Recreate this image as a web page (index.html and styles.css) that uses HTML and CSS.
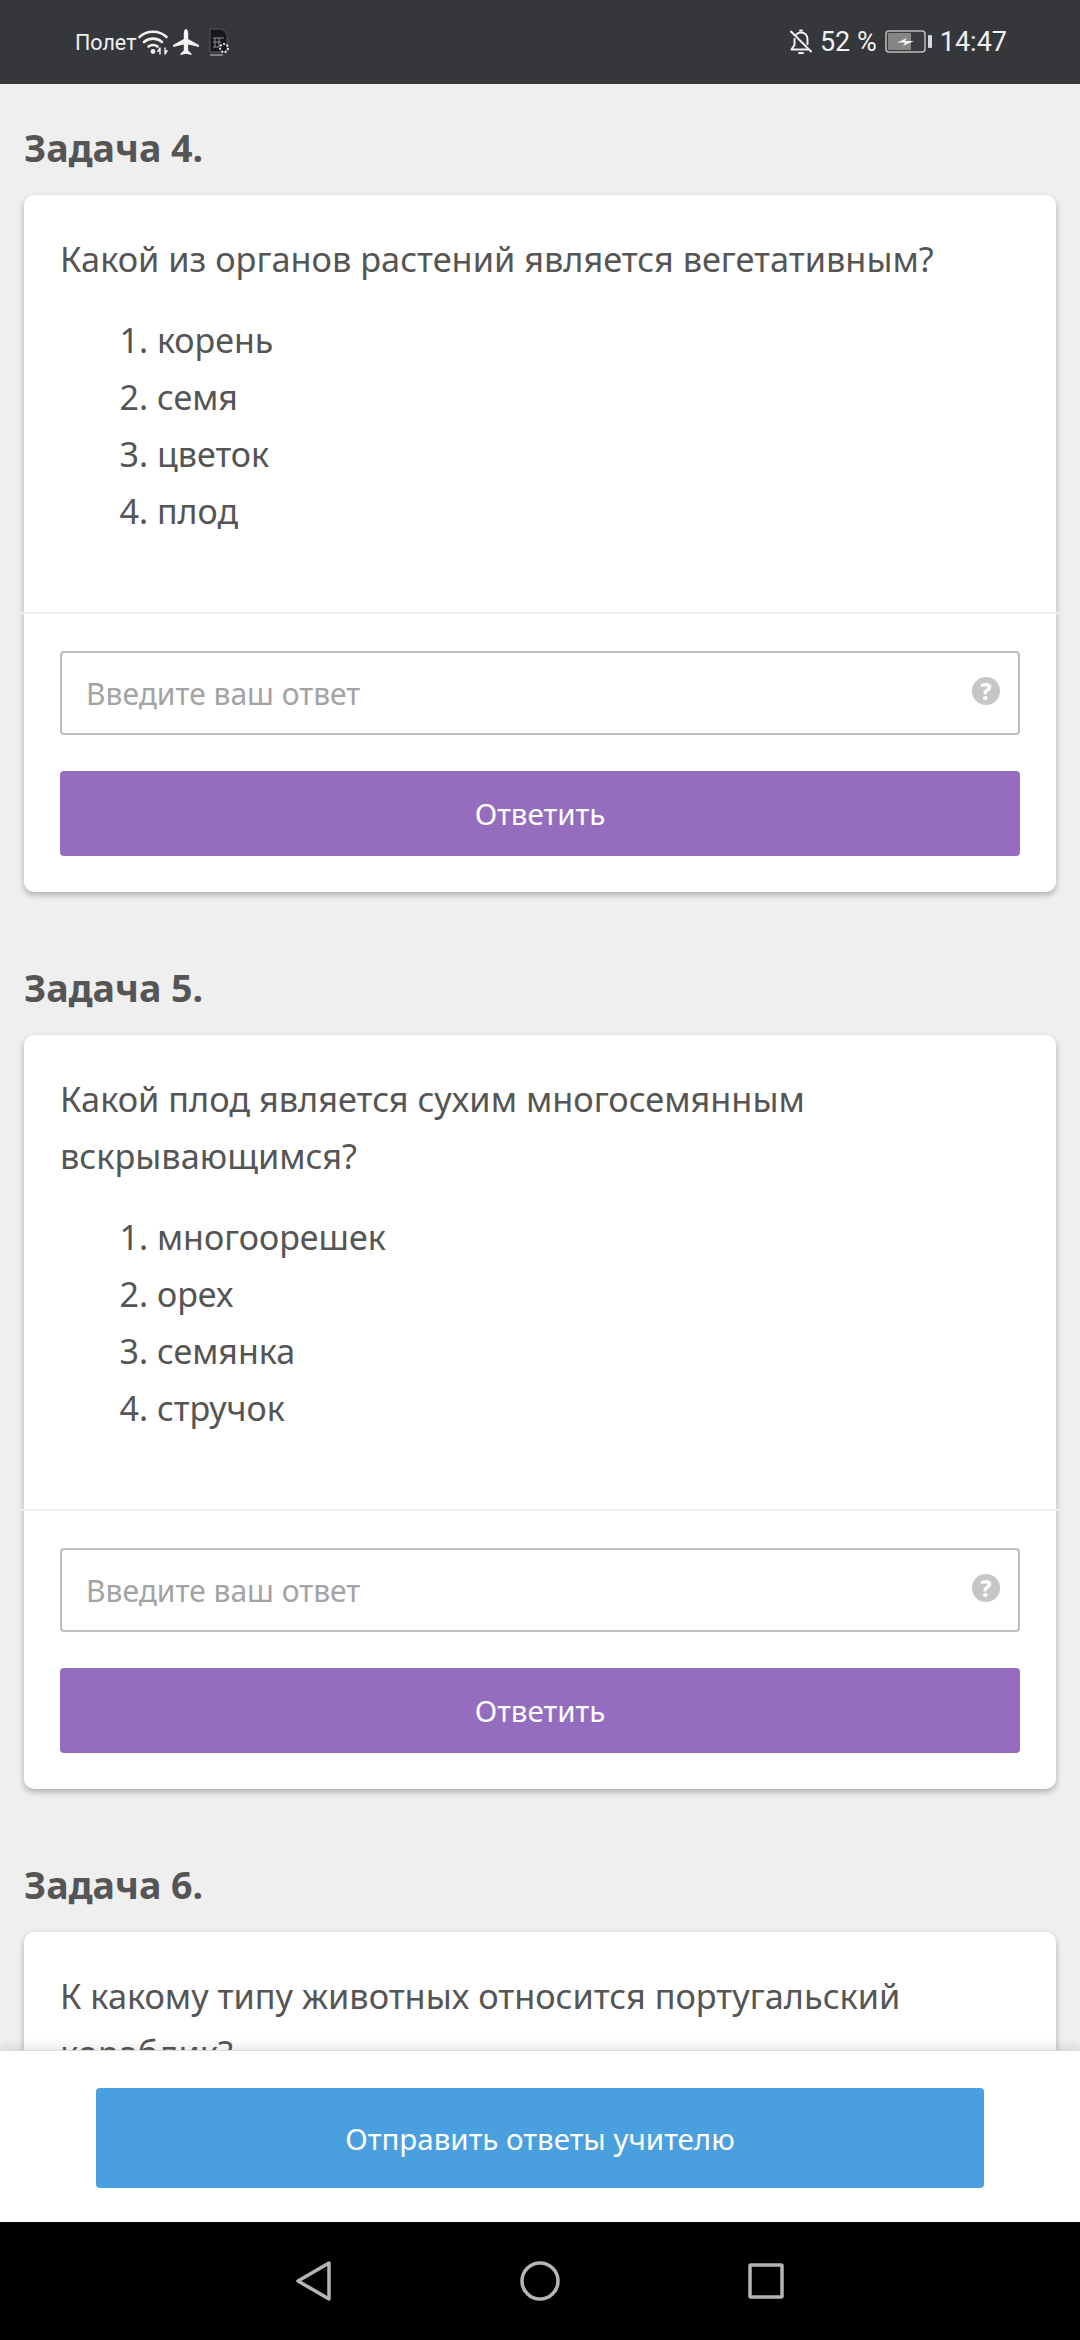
FILE: index.html
```html
<!DOCTYPE html>
<html lang="ru">
<head>
    <meta charset="UTF-8">
    <meta name="viewport" content="width=device-width, initial-scale=1.0">
    <title>Задачи</title>
    <link rel="stylesheet" href="styles.css">
</head>
<body>

<div class="status-bar">
    <div class="status-left">
        <span class="status-label">Полет</span>
        <svg class="ic-wifi" width="30" height="26" viewBox="0 0 30 26" fill="none" stroke="#f2f2f2" stroke-width="2.6" stroke-linecap="round">
            <path d="M1.5 8 C8.5 1 21.5 1 28.5 8"/>
            <path d="M6 13 C11 8.5 19 8.5 24 13"/>
            <path d="M10.5 17.5 C13 15.5 17 15.5 19.5 17.5"/>
            <circle cx="15" cy="22.5" r="2.4" fill="#f2f2f2" stroke="none"/>
            <path d="M22 25 V19 M22 19 l-2 3 h2 M27 19 V25 M27 25 l2 -3 h-2" stroke-width="1.4"/>
        </svg>
        <svg class="ic-plane" width="26" height="27" viewBox="0 0 26 27" fill="#f5f5f5">
            <path d="M13 0 C14.6 0 15.2 2.5 15.2 5 V10 L26 16 V18 L15.2 15.5 V21.5 L18.5 24.5 V26 L13 24.8 L7.5 26 V24.5 L10.8 21.5 V15.5 L0 18 V16 L10.8 10 V5 C10.8 2.5 11.4 0 13 0 Z"/>
        </svg>
        <svg class="ic-sim" width="21" height="28" viewBox="0 0 21 28">
            <path d="M1 1 H13 L18 6 V24 H1 Z" fill="#17181a" stroke="#55565a" stroke-width="1"/>
            <path d="M4 10 H15 M4 14 H12 M6 10 V19 M10 10 V19 M4 19 H10" stroke="#8e8f92" stroke-width="1"/>
            <path d="M1 27 H14" stroke="#c9c9c9" stroke-width="1"/>
            <circle cx="15" cy="20" r="4" fill="none" stroke="#e5e5e5" stroke-width="2" stroke-dasharray="2 1.5"/>
        </svg>
    </div>
    <div class="status-right">
        <svg class="ic-bell" width="24" height="26" viewBox="0 0 24 26" fill="none" stroke="#f0f0f0" stroke-width="2" stroke-linecap="round" stroke-linejoin="round">
            <path d="M7 6 C8 4.5 10 3.5 12 3.5 C16 3.5 18.5 6.5 18.5 10.5 V15"/>
            <path d="M5.5 10 V16 L2.5 20.5 H19"/>
            <path d="M10 24 H14"/>
            <path d="M11 1.5 H13"/>
            <path d="M2 2.5 L22 22.5"/>
        </svg>
        <span class="status-battery-pct">52 %</span>
        <svg class="ic-battery" width="48" height="24" viewBox="0 0 48 24">
            <rect x="1" y="1" width="39" height="21" rx="3" fill="#3a3b3f" stroke="#bdbdbd" stroke-width="1.5"/>
            <rect x="3" y="3" width="23" height="17" rx="1" fill="#858585"/>
            <path d="M12 12.5 L22 8 L20 11 H29 L18 16 L20 12.5 Z" fill="#f2f2f2"/>
            <rect x="43" y="5" width="4" height="13" rx="1" fill="#d8d8d8"/>
        </svg>
        <span class="status-time">14:47</span>
    </div>
</div>

<main class="tasks">
    <section class="task">
        <h2 class="task-title">Задача 4.</h2>
        <div class="card">
            <div class="card-body">
                <p class="question">Какой из органов растений является вегетативным?</p>
                <ol class="options">
                    <li>корень</li>
                    <li>семя</li>
                    <li>цветок</li>
                    <li>плод</li>
                </ol>
            </div>
            <div class="card-footer">
                <div class="answer-box">
                    <span class="placeholder">Введите ваш ответ</span>
                    <span class="help-icon">?</span>
                </div>
                <button class="answer-btn">Ответить</button>
            </div>
        </div>
    </section>

    <section class="task">
        <h2 class="task-title">Задача 5.</h2>
        <div class="card">
            <div class="card-body">
                <p class="question">Какой плод является сухим многосемянным вскрывающимся?</p>
                <ol class="options">
                    <li>многоорешек</li>
                    <li>орех</li>
                    <li>семянка</li>
                    <li>стручок</li>
                </ol>
            </div>
            <div class="card-footer">
                <div class="answer-box">
                    <span class="placeholder">Введите ваш ответ</span>
                    <span class="help-icon">?</span>
                </div>
                <button class="answer-btn">Ответить</button>
            </div>
        </div>
    </section>

    <section class="task">
        <h2 class="task-title">Задача 6.</h2>
        <div class="card">
            <div class="card-body">
                <p class="question">К какому типу животных относится португальский кораблик?</p>
            </div>
        </div>
    </section>
</main>

<div class="send-bar">
    <button class="send-btn">Отправить ответы учителю</button>
</div>

<nav class="nav-bar">
    <svg width="36" height="40" viewBox="0 0 36 40" fill="none" stroke="#b5b5b5" stroke-width="3.5" stroke-linejoin="round">
        <path d="M33 2 V38 L2 20 Z"/>
    </svg>
    <svg width="40" height="40" viewBox="0 0 40 40" fill="none" stroke="#b5b5b5" stroke-width="3.5">
        <circle cx="20" cy="20" r="18"/>
    </svg>
    <svg width="36" height="36" viewBox="0 0 36 36" fill="none" stroke="#b5b5b5" stroke-width="3.5" stroke-linejoin="round">
        <rect x="2" y="2" width="32" height="32" rx="1"/>
    </svg>
</nav>

</body>
</html>
```

FILE: styles.css
```css
* {
    box-sizing: border-box;
}

html, body {
    margin: 0;
    height: 2340px;
    overflow: hidden;
}

body {
    font-family: "Noto Sans", Arial, sans-serif;
    background: #efefef;
    color: #555;
    display: flex;
    flex-direction: column;
}

/* status bar */
.status-bar {
    height: 84px;
    flex: none;
    background: #36373b;
    color: #f0f0f0;
    font-family: Roboto, Arial, sans-serif;
    display: flex;
    justify-content: space-between;
    align-items: center;
    padding: 0 73px 0 75px;
}

.status-left, .status-right {
    display: flex;
    align-items: center;
}

.status-label { font-size: 21.5px; margin-right: 1px; }
.ic-plane { margin-left: 5px; }
.ic-sim { margin-left: 10px; }
.status-battery-pct { font-size: 27px; margin-left: 7px; }
.ic-battery { margin-left: 8px; }
.status-time { font-size: 27px; margin-left: 7px; }

/* tasks */
.tasks {
    height: 1966px;
    flex: none;
    overflow: hidden;
    padding: 38px 24px 0;
}

.task {
    margin-bottom: 70px;
}

.task-title {
    margin: 0 0 22px;
    font-size: 37.6px;
    line-height: 51px;
    font-weight: 700;
}

.card {
    background: #fff;
    border-radius: 10px;
    box-shadow: 0 3px 6px rgba(0, 0, 0, 0.28);
}

.card-body {
    padding: 35px 36px 72px;
}

.question {
    margin: 0 0 25px;
    font-size: 34.3px;
    line-height: 57px;
}

.options {
    margin: 0;
    padding-left: 97px;
    font-size: 34px;
    line-height: 57px;
}

.card-footer {
    margin: 0 -4px;
    padding: 37px 40px 36px;
    border-top: 2px solid #efefef;
    display: flex;
    flex-direction: column;
    gap: 36px;
}

.answer-box {
    height: 84px;
    border: 2px solid #bdbdbd;
    border-radius: 4px;
    padding: 0 18px 0 24px;
    display: flex;
    justify-content: space-between;
    align-items: center;
}

.placeholder {
    font-size: 30px;
    color: #a3a3a3;
}

.help-icon {
    width: 28px;
    height: 28px;
    border-radius: 50%;
    background: #c6c6c6;
    color: #fff;
    font-size: 23px;
    line-height: 28px;
    font-weight: 800;
    text-align: center;
    margin-bottom: 4px;
}

.answer-btn, .send-btn {
    display: block;
    border: none;
    border-radius: 4px;
    color: #fff;
    font-family: inherit;
    font-size: 29.5px;
}

.answer-btn {
    width: 100%;
    height: 85px;
    background: #956dbf;
}

/* bottom bar */
.send-bar {
    height: 172px;
    flex: none;
    position: relative;
    background: #fff;
    border-top: 1px solid #ddd;
    box-shadow: 0 -3px 10px rgba(0, 0, 0, 0.1);
    padding: 37px 96px 0;
}

.send-btn {
    width: 100%;
    height: 100px;
    background: #4aa0df;
}

.nav-bar {
    height: 118px;
    flex: none;
    background: #000;
    display: flex;
    justify-content: center;
    align-items: center;
    gap: 188px;
}
```
